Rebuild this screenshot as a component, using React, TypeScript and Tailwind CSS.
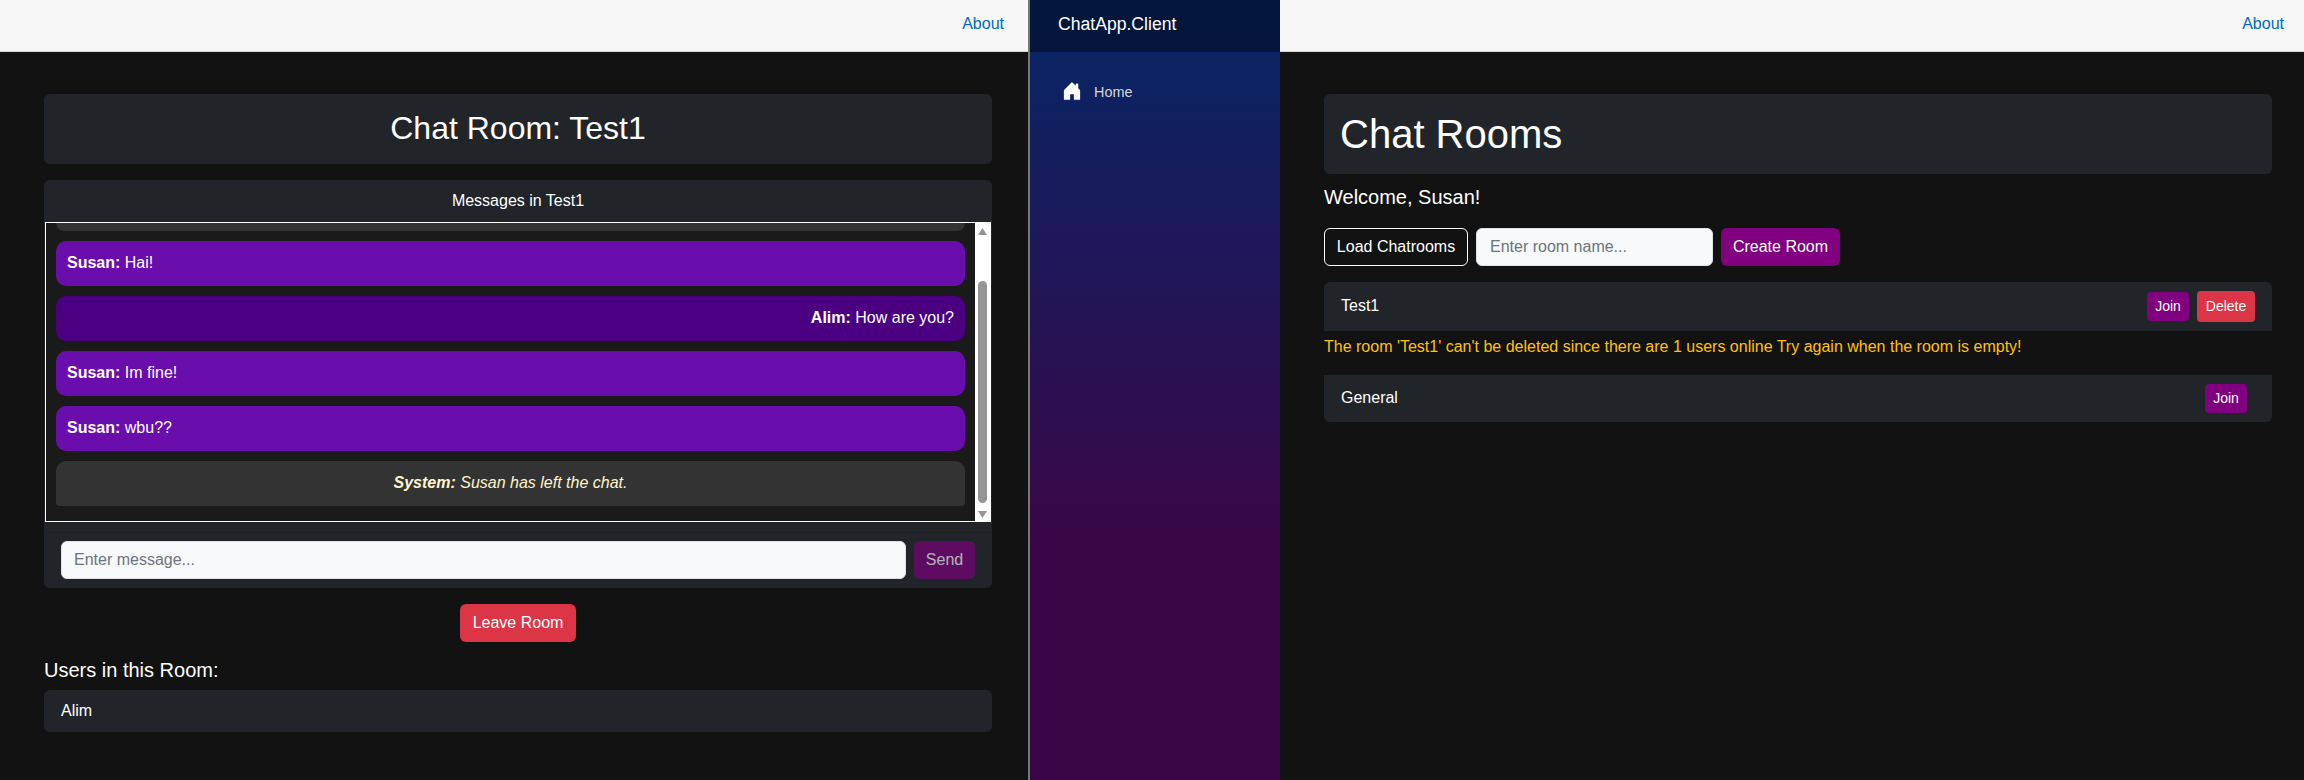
const font = "font-['Liberation_Sans',Arial,sans-serif]";

function TopBar({ pad }: { pad: string }) {
  return (
    <div className={`h-[52px] shrink-0 bg-[#f7f7f7] border-b border-[#d6d5d5] flex items-center justify-end ${pad}`}>
      <a className="text-[16px] text-[#006bb7] leading-6 -mt-[3px]">About</a>
    </div>
  );
}

function Bubble({ name, text, who }: { name: string; text: string; who: "me" | "other" | "sys" }) {
  const cls =
    who === "me"
      ? "bg-[#6a0dad] text-white text-left rounded-[10px]"
      : who === "other"
      ? "bg-[#4b0082] text-white text-right rounded-[10px]"
      : "bg-[#333333] text-[#fff3cd] text-center italic rounded-t-[10px] rounded-b-[4px]";
  return (
    <div className={`h-[45px] shrink-0 px-[11px] pt-[10px] text-[16px] leading-6 ${cls}`}>
      <strong className="font-bold">{name}:</strong> {text}
    </div>
  );
}

function ScrollBar() {
  return (
    <div className="w-[15px] shrink-0 bg-white flex flex-col items-center">
      <svg width="9" height="7" viewBox="0 0 9 7" className="mt-[5px] shrink-0">
        <path d="M4.5 0L9 7H0z" fill="#959595" />
      </svg>
      <div className="w-[9px] h-[222px] mt-[46px] rounded-[5px] bg-[#959595] shrink-0" />
      <svg width="9" height="7" viewBox="0 0 9 7" className="mt-[8px] shrink-0">
        <path d="M0 0H9L4.5 7z" fill="#959595" />
      </svg>
    </div>
  );
}

function ChatPanel() {
  return (
    <div className="w-[1028px] shrink-0 flex flex-col">
      <TopBar pad="pr-[24px]" />
      <div className="pt-[42px] pl-[44px] pr-[36px] flex flex-col">
        <div className="h-[70px] bg-[#212529] rounded-[6px] flex items-center justify-center">
          <h2 className="text-[32px] leading-[38px] text-white font-normal -mt-[2px]">Chat Room: Test1</h2>
        </div>

        <div className="mt-[16px] h-[408px] bg-[#212529] rounded-[6px] flex flex-col">
          <div className="h-[42px] shrink-0 pt-[9px] text-center text-[16px] leading-6 text-white">Messages in Test1</div>
          <div className="mx-px h-[300px] shrink-0 border border-white bg-[#1a1a1a] flex overflow-hidden">
            <div className="flex-1 min-w-0 px-[10px] flex flex-col gap-[10px]">
              <div className="h-[8px] shrink-0 bg-[#333333] rounded-b-[10px]" />
              <Bubble name="Susan" text="Hai!" who="me" />
              <Bubble name="Alim" text="How are you?" who="other" />
              <Bubble name="Susan" text="Im fine!" who="me" />
              <Bubble name="Susan" text="wbu??" who="me" />
              <Bubble name="System" text="Susan has left the chat." who="sys" />
            </div>
            <ScrollBar />
          </div>
          <div className="mt-[10px] border-t border-[#1d2124] flex-1 px-[17px] pt-[8px] flex gap-2">
            <input
              placeholder="Enter message..."
              className="flex-1 min-w-0 h-[38px] px-3 bg-[#f8f9fa] border border-[#dee2e6] rounded-[6px] text-[16px] placeholder:text-[#6c757d] outline-none"
            />
            <button className="w-[61px] h-[38px] bg-[#800080] text-white text-[16px] rounded-[6px] opacity-65">Send</button>
          </div>
        </div>

        <div className="mt-[16px] flex justify-center">
          <button className="w-[116px] h-[38px] bg-[#dc3545] text-white text-[16px] rounded-[6px]">Leave Room</button>
        </div>

        <h5 className="mt-[16px] text-[20px] leading-6 text-white font-normal">Users in this Room:</h5>
        <div className="mt-[8px] h-[42px] bg-[#212529] rounded-[6px] pl-[17px] flex items-center text-[16px] text-white">
          <span>Alim</span>
        </div>
      </div>
    </div>
  );
}

function Sidebar() {
  return (
    <div className="w-[250px] shrink-0 flex flex-col bg-[linear-gradient(180deg,#052767_0%,#3a0647_70%)]">
      <div className="h-[52px] shrink-0 bg-black/40 pl-[28px] flex items-center">
        <span className="text-[17.6px] text-white -mt-[3px]">ChatApp.Client</span>
      </div>
      <div className="mt-[20px] pl-[32px] flex items-center h-[40px]">
        <svg width="20" height="20" viewBox="0 0 16 16" fill="white" className="shrink-0 -mt-[2px]">
          <path d="M6.5 14.5v-3.505c0-.245.25-.495.5-.495h2c.25 0 .5.25.5.5v3.5a.5.5 0 0 0 .5.5h4a.5.5 0 0 0 .5-.5v-7a.5.5 0 0 0-.146-.354L13 5.793V2.5a.5.5 0 0 0-.5-.5h-1a.5.5 0 0 0-.5.5v1.293L8.354 1.146a.5.5 0 0 0-.708 0l-6 6A.5.5 0 0 0 1.5 7.5v7a.5.5 0 0 0 .5.5h4a.5.5 0 0 0 .5-.5" />
        </svg>
        <span className="ml-[12px] text-[14.4px] text-[#d7d7d7] mt-[2px]">Home</span>
      </div>
    </div>
  );
}

function SmallBtn({ label, red, big }: { label: string; red?: boolean; big?: boolean }) {
  return (
    <button
      className={`${big ? "h-[31px] w-[58px]" : "h-[29px] w-[42px]"} ${red ? "bg-[#dc3545]" : "bg-[#800080]"} text-white text-[14px] rounded-[4px]`}
    >
      {label}
    </button>
  );
}

function RoomsPanel() {
  return (
    <div className="flex-1 min-w-0 flex flex-col">
      <TopBar pad="pr-[20px]" />
      <div className="pt-[42px] pl-[44px] pr-[32px] flex flex-col">
        <div className="h-[80px] bg-[#212529] rounded-[6px] px-[16px] flex items-center">
          <h1 className="text-[40px] leading-[48px] text-white font-normal">Chat Rooms</h1>
        </div>
        <h5 className="mt-[11px] text-[20px] leading-6 text-white font-normal">Welcome, Susan!</h5>
        <div className="mt-[19px] flex gap-2 h-[38px]">
          <button className="w-[144px] border border-white rounded-[6px] text-white text-[16px]">Load Chatrooms</button>
          <input
            placeholder="Enter room name..."
            className="w-[237px] pl-[13px] pr-3 bg-[#f8f9fa] border border-[#dee2e6] rounded-[6px] text-[16px] placeholder:text-[#6c757d] outline-none"
          />
          <button className="w-[119px] bg-[#800080] rounded-[6px] text-white text-[16px]">Create Room</button>
        </div>
        <div className="mt-[16px] h-[49px] bg-[#212529] rounded-t-[6px] pl-[17px] pr-[17px] flex items-center justify-between text-[16px] text-white">
          <span className="-mt-[2px]">Test1</span>
          <div className="flex items-center gap-2">
            <SmallBtn label="Join" />
            <SmallBtn label="Delete" red big />
          </div>
        </div>
        <p className="mt-[4px] h-[24px] text-[16px] leading-6 text-[#ffc107]">
          The room 'Test1' can't be deleted since there are 1 users online Try again when the room is empty!
        </p>
        <div className="mt-[16px] h-[47px] bg-[#212529] rounded-b-[6px] pl-[17px] pr-[25px] flex items-center justify-between text-[16px] text-white">
          <span className="-mt-[1px]">General</span>
          <SmallBtn label="Join" />
        </div>
      </div>
    </div>
  );
}

export default function App() {
  return (
    <div className={`${font} w-[2304px] h-[780px] bg-[#121212] flex overflow-hidden`}>
      <ChatPanel />
      <div className="w-[2px] shrink-0 bg-[#777777]" />
      <Sidebar />
      <RoomsPanel />
    </div>
  );
}
